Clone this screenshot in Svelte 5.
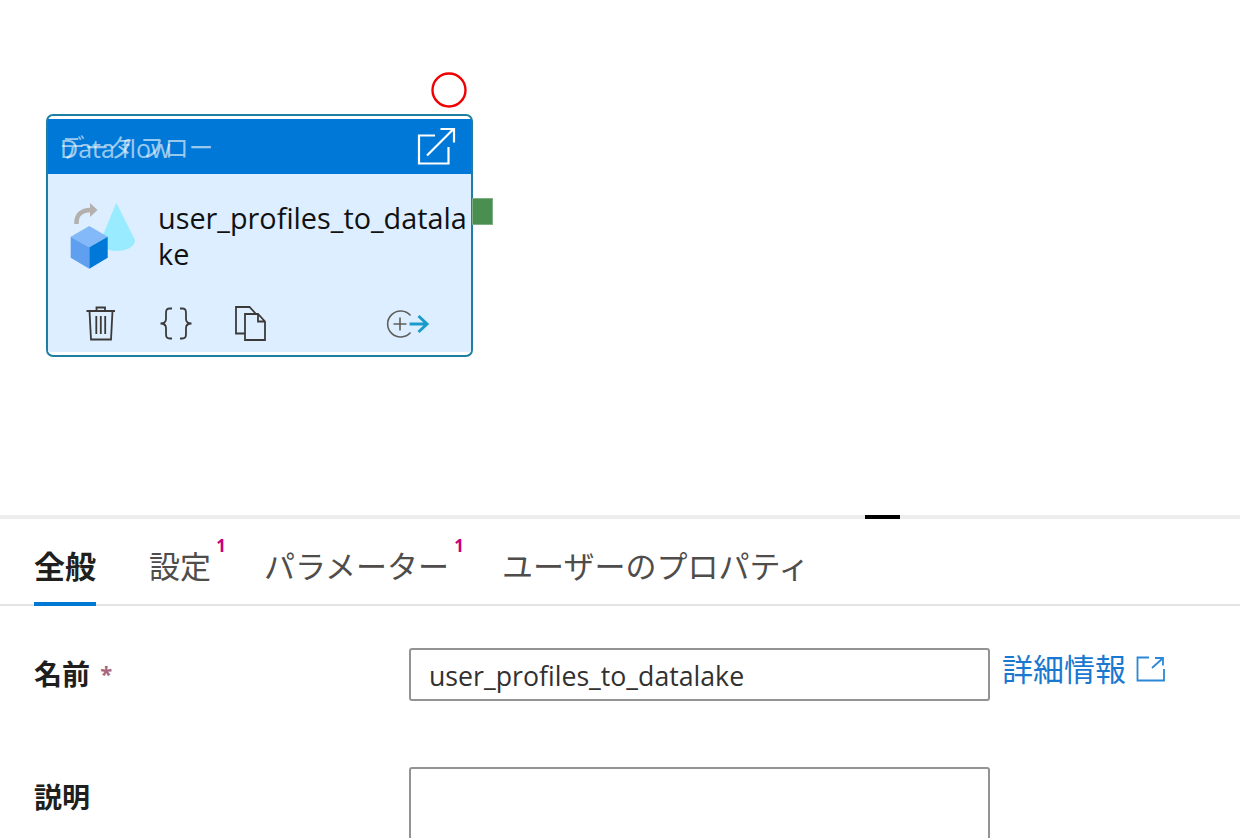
<script>
  const tabs = [
    { label: '全般', active: true, badge: false },
    { label: '設定', active: false, badge: true },
    { label: 'パラメーター', active: false, badge: true },
    { label: 'ユーザーのプロパティ', active: false, badge: false }
  ];
</script>

<div class="page">
  <section class="canvas">
    <svg class="ring" width="38" height="38" viewBox="0 0 38 38" aria-hidden="true">
      <circle cx="19" cy="19" r="16.500" fill="none" stroke="#f00000" stroke-width="2.400" />
    </svg>

    <article class="node">
      <header class="node-head">
        <div class="titles">
          <span class="title jp">データ フロー</span>
          <span class="title en">Data flow</span>
        </div>
        <svg class="open" width="40" height="40" viewBox="417 127 40 40" aria-hidden="true">
          <path d="M435 135.500H419V163.500H448.500V147" fill="none" stroke="#fff" stroke-width="2.200" />
          <path d="M427 155.500L453.500 129M440.500 129H454V142.500" fill="none" stroke="#fff" stroke-width="2.200" />
        </svg>
      </header>

      <div class="node-fill">
        <div class="node-body">
          <svg class="df-icon" width="70" height="72" viewBox="68 200 70 72" aria-hidden="true">
            <path d="M116.300 202.700L135 240C135 247 126 251 117 251C112 251 108 250 105 248L101 240Z" fill="#99ebff" />
            <path d="M76.500 224C76 215 81 210 91 210" fill="none" stroke="#b3b0ad" stroke-width="4.500" />
            <path d="M90 203L97.500 210L90 217Z" fill="#b3b0ad" />
            <path d="M89.300 226L107.700 236.700L89.300 247.300L70.700 236.700Z" fill="#83b9f9" />
            <path d="M70.700 236.700L89.300 247.300V268.700L70.700 257.700Z" fill="#5ea0ef" />
            <path d="M107.700 236.700V257.700L89.300 268.700V247.300Z" fill="#0078d7" />
          </svg>
          <div class="node-name">user_profiles_to_datalake</div>
        </div>

        <footer class="node-actions">
          <svg class="trash" width="32" height="36" viewBox="85 306 32 36" aria-hidden="true">
            <path d="M86.500 311H115M96.500 310.500V307.500H105V310.500M89.500 311L91 339.500H111L112.500 311M96.300 316V334M100.800 316V334M105.200 316V334" fill="none" stroke="#3b3a39" stroke-width="1.800" />
          </svg>
          <svg class="braces" width="34" height="34" viewBox="159 306 34 34" aria-hidden="true">
            <path d="M172 307.500H169.500C166 307.500 166 310 166 313V318C166 321 164 322.500 160.500 322.500C164 322.500 166 324 166 327V332C166 335 166 337.500 169.500 337.500H172" fill="none" stroke="#3b3a39" stroke-width="1.800" />
            <path d="M180 307.500H182.500C186 307.500 186 310 186 313V318C186 321 188 322.500 191.500 322.500C188 322.500 186 324 186 327V332C186 335 186 337.500 182.500 337.500H180" fill="none" stroke="#3b3a39" stroke-width="1.800" />
          </svg>
          <svg class="copy" width="32" height="36" viewBox="234 306 32 36" aria-hidden="true">
            <path d="M245 333.500H236V307H249.500L256 314" fill="none" stroke="#3b3a39" stroke-width="1.800" />
            <path d="M245 314H258L265 321.500V340H245ZM258 314V321.500H265" fill="none" stroke="#3b3a39" stroke-width="1.800" />
          </svg>
          <svg class="add" width="46" height="32" viewBox="385 308 46 32" aria-hidden="true">
            <path d="M410.500 315.500A13 13 0 1 0 410.500 332.500" fill="none" stroke="#605e5c" stroke-width="1.600" />
            <path d="M393.500 324H406.500M400 317.500V330.500" fill="none" stroke="#605e5c" stroke-width="1.600" />
            <path d="M409.500 324H427M418.500 316L427 324L418.500 332" fill="none" stroke="#1a9bcb" stroke-width="3" />
          </svg>
        </footer>
      </div>

      <span class="success"></span>
    </article>
  </section>

  <section class="panel">
    <div class="splitter"><span class="grip"></span></div>

    <nav class="tabs">
      {#each tabs as tab}
        <div class="tab" class:active={tab.active}>
          {tab.label}
          {#if tab.badge}<sup class="badge">1</sup>{/if}
        </div>
      {/each}
    </nav>

    <form class="form">
      <div class="label">名前 <span class="req">*</span></div>
      <div class="input">user_profiles_to_datalake</div>
      <a class="more" href="#more">
        詳細情報
        <svg width="32" height="32" viewBox="1136 655 32 32" aria-hidden="true">
          <path d="M1150 658.500H1138.500V681.500H1165V670" fill="none" stroke="#2b88d8" stroke-width="1.800" />
          <path d="M1153 669L1163.500 659.500M1156 659H1164V666.500" fill="none" stroke="#2b88d8" stroke-width="1.800" />
        </svg>
      </a>

      <div class="label second">説明</div>
      <div class="input area"></div>
    </form>
  </section>
</div>

<style>
  :global(body) {
    margin: 0;
    background: #fff;
  }

  .page {
    width: 1240px;
    height: 838px;
    overflow: hidden;
    background: #fff;
    font-family: "Open Sans", "Noto Sans CJK JP", sans-serif;
    color: #323130;
  }

  .canvas {
    position: relative;
    height: 515px;
  }

  .ring {
    position: absolute;
    left: 429.500px;
    top: 71px;
  }

  .node {
    position: absolute;
    left: 46px;
    top: 114px;
    width: 427px;
    height: 243px;
    box-sizing: border-box;
    display: flex;
    flex-direction: column;
    border: 2px solid #1f7fa3;
    border-radius: 7px;
    padding: 3px 0;
    background: #fff;
  }

  .node-head {
    flex: none;
    height: 55px;
    display: flex;
    align-items: center;
    justify-content: space-between;
    background: #0078d7;
    padding: 0 14px 0 12px;
  }

  .titles {
    display: grid;
    padding-top: 3px;
    line-height: 28px;
    color: rgba(255, 255, 255, 0.62);
  }

  .title {
    grid-area: 1 / 1;
    white-space: pre;
  }

  .jp {
    font-size: 24.500px;
  }

  .en {
    font-size: 25px;
  }

  .open {
    display: block;
  }

  .node-fill {
    flex: 1;
    background: #dceeff;
  }

  .node-body {
    display: flex;
    align-items: flex-start;
    gap: 20px;
    padding: 26px 0 0 20px;
    height: 127px;
    box-sizing: border-box;
  }

  .df-icon {
    display: block;
    flex: none;
  }

  .node-name {
    width: 312px;
    font-size: 28.800px;
    line-height: 36px;
    color: #111;
    word-break: break-all;
  }

  .node-actions {
    display: flex;
    align-items: center;
    height: 46px;
  }

  .trash {
    margin-left: 37px;
  }

  .braces {
    margin-left: 42px;
  }

  .copy {
    margin-left: 41px;
  }

  .add {
    margin-left: 119px;
  }

  .node-actions svg {
    display: block;
    flex: none;
  }

  .success {
    position: absolute;
    left: 424px;
    top: 82px;
    width: 21px;
    height: 27px;
    box-sizing: border-box;
    background: #4a8f50;
    border: 1px solid #7fb083;
  }

  .splitter {
    position: relative;
    height: 4px;
    background: #ededed;
  }

  .grip {
    position: absolute;
    left: 865px;
    top: 0;
    width: 35px;
    height: 4px;
    background: #000;
  }

  .tabs {
    display: flex;
    height: 85px;
    padding-left: 34px;
    border-bottom: 2px solid #e4e4e4;
    font-size: 31px;
    color: #4f4d4b;
  }

  .tab {
    position: relative;
    box-sizing: border-box;
    height: 87px;
    padding-top: 25px;
    line-height: 44px;
    margin-right: 53px;
    white-space: nowrap;
  }

  .tab.active {
    color: #201f1e;
    font-weight: 700;
    border-bottom: 4px solid #0078d4;
  }

  .badge {
    position: absolute;
    right: -15px;
    top: 17px;
    font: 700 17px/20px "Open Sans", sans-serif;
    color: #c8007e;
    margin: 0;
  }

  .form {
    display: grid;
    grid-template-columns: 375px 581px auto;
    grid-template-rows: 53px auto;
    padding: 42px 0 0 34px;
    row-gap: 66px;
    align-items: start;
  }

  .label {
    font-size: 28px;
    font-weight: 700;
    line-height: 53px;
    color: #201f1e;
  }

  .req {
    margin-left: 3px;
    position: relative;
    top: -3px;
    font-size: 22px;
    font-weight: 700;
    color: #a8667e;
  }

  .input {
    box-sizing: border-box;
    width: 581px;
    height: 53px;
    border: 2px solid #939393;
    border-radius: 3px;
    padding: 0 18px;
    font-size: 26.700px;
    line-height: 51px;
    color: #323130;
  }

  .area {
    height: 120px;
  }

  .more {
    display: flex;
    align-items: center;
    gap: 9px;
    margin: -6px 0 0 12px;
    height: 50px;
    font-size: 31px;
    color: #1a78d0;
    text-decoration: none;
    white-space: nowrap;
  }

  .more svg {
    display: block;
    flex: none;
    margin-top: 6px;
  }

  .second {
    grid-column: 1;
    margin-top: 4px;
  }
</style>
